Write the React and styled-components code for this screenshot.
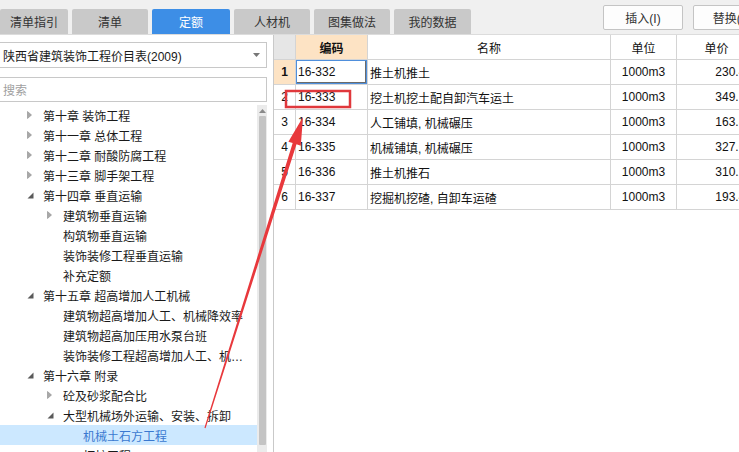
import React from "react";
import styled, { createGlobalStyle } from "styled-components";

const GlobalStyle = createGlobalStyle`
  html, body {
    margin: 0;
    padding: 0;
    background: #ffffff;
  }
  body {
    font-family: "Liberation Sans", "Noto Sans CJK SC", sans-serif;
    font-size: 12px;
    color: #1a1a1a;
  }
`;

const Page = styled.div`
  position: relative;
  width: 739px;
  height: 452px;
  overflow: hidden;
  background: #ffffff;
`;

const TopBar = styled.div`
  display: flex;
  align-items: flex-start;
  height: 35px;
  box-sizing: border-box;
  background: #f0f0f0;
  border-bottom: 1px solid #dcdcdc;
`;

const Tabs = styled.div`
  display: flex;
  gap: 4px;
  padding-top: 9px;
  flex-shrink: 0;
`;

const Tab = styled.div`
  width: ${(p) => p.$w}px;
  height: 25px;
  flex-shrink: 0;
  display: flex;
  align-items: center;
  justify-content: center;
  border-radius: 2px 2px 0 0;
  background: ${(p) => (p.$active ? "#3d8ee6" : "#c9c9c9")};
  color: ${(p) => (p.$active ? "#ffffff" : "#333333")};
  font-size: 12px;
`;

const Actions = styled.div`
  display: flex;
  gap: 10px;
  margin-left: 132px;
  margin-top: 5px;
  flex-shrink: 0;
`;

const ActionButton = styled.div`
  width: 80px;
  height: 25px;
  box-sizing: border-box;
  flex-shrink: 0;
  display: flex;
  align-items: center;
  justify-content: center;
  background: #fdfdfd;
  border: 1px solid #c4c4c4;
  border-radius: 2px;
  color: #333333;
  font-size: 12px;
`;

const Body = styled.div`
  display: flex;
  height: 417px;
`;

const LeftPanel = styled.div`
  width: 274px;
  flex-shrink: 0;
  box-sizing: border-box;
  border-right: 1px solid #c9c9c9;
  padding-top: 7px;
  display: flex;
  flex-direction: column;
`;

const Field = styled.div`
  width: 267px;
  height: ${(p) => p.$h}px;
  margin-top: ${(p) => p.$mt}px;
  box-sizing: border-box;
  border: 1px solid #c8c8c8;
  border-left: none;
  display: flex;
  align-items: center;
  padding-left: 3px;
  padding-right: 6px;
  color: ${(p) => (p.$placeholder ? "#a0a0a0" : "#1a1a1a")};
  font-size: 12px;
`;

const FieldText = styled.span`
  flex: 1;
`;

const TreeArea = styled.div`
  display: flex;
  margin-top: 3px;
  margin-right: 6px;
  flex: 1;
  overflow: hidden;
`;

const TreeList = styled.div`
  flex: 1;
  overflow: hidden;
`;

const TreeRow = styled.div`
  height: 20px;
  display: flex;
  align-items: center;
  padding-left: ${(p) => 26 + p.$level * 20}px;
  background: ${(p) => (p.$selected ? "#cce8ff" : "transparent")};
  color: ${(p) => (p.$selected ? "#3a78d0" : "#1a1a1a")};
  font-size: 12px;
  white-space: nowrap;
`;

const Expander = styled.span`
  width: 17px;
  flex-shrink: 0;
  display: flex;
  align-items: center;
  padding-left: 1px;
  box-sizing: border-box;
`;

const TreeLabel = styled.span`
  overflow: hidden;
  text-overflow: ellipsis;
  padding-right: 3px;
`;

const ScrollBar = styled.div`
  width: 10px;
  flex-shrink: 0;
  background: #ebebeb;
  display: flex;
  flex-direction: column;
  align-items: center;
`;

const ScrollArrow = styled.div`
  height: 11px;
  display: flex;
  align-items: center;
  justify-content: center;
`;

const ScrollThumb = styled.div`
  width: 7px;
  height: 329px;
  background: #c4c4c4;
  border-radius: 1px;
`;

const GridWrap = styled.div`
  flex: 1;
  overflow: hidden;
`;

const Grid = styled.div`
  display: grid;
  grid-template-columns: 22px 72px 243px 66px 80px;
  grid-auto-rows: 25px;
  width: 483px;
`;

const Cell = styled.div`
  box-sizing: border-box;
  border-right: 1px solid #d4d4d4;
  border-bottom: 1px solid #d4d4d4;
  display: flex;
  align-items: center;
  justify-content: ${(p) =>
    p.$align === "center" ? "center" : p.$align === "right" ? "flex-end" : "flex-start"};
  padding: 0 ${(p) => (p.$align === "right" ? 4 : 2)}px 0 2px;
  background: ${(p) => p.$bg || "#ffffff"};
  font-weight: ${(p) => (p.$bold ? 700 : 400)};
  font-size: 12px;
  color: #111111;
  white-space: nowrap;
  overflow: hidden;
  box-shadow: ${(p) => (p.$focus ? "inset 0 0 0 1px #4f8fdc, inset -1px -1px 0 1px #6b6b6b" : "none")};
`;

const Overlay = styled.svg`
  position: absolute;
  left: 0;
  top: 0;
  pointer-events: none;
`;

const tabs = [
  { label: "清单指引", w: 68 },
  { label: "清单", w: 76 },
  { label: "定额", w: 78, active: true },
  { label: "人材机", w: 76 },
  { label: "图集做法", w: 76 },
  { label: "我的数据", w: 77 },
];

const tree = [
  { label: "第十章 装饰工程", level: 0, state: "closed" },
  { label: "第十一章 总体工程", level: 0, state: "closed" },
  { label: "第十二章 耐酸防腐工程", level: 0, state: "closed" },
  { label: "第十三章 脚手架工程", level: 0, state: "closed" },
  { label: "第十四章 垂直运输", level: 0, state: "open" },
  { label: "建筑物垂直运输", level: 1, state: "closed" },
  { label: "构筑物垂直运输", level: 1 },
  { label: "装饰装修工程垂直运输", level: 1 },
  { label: "补充定额", level: 1 },
  { label: "第十五章 超高增加人工机械", level: 0, state: "open" },
  { label: "建筑物超高增加人工、机械降效率", level: 1 },
  { label: "建筑物超高加压用水泵台班", level: 1 },
  { label: "装饰装修工程超高增加人工、机械降效率", level: 1 },
  { label: "第十六章 附录", level: 0, state: "open" },
  { label: "砼及砂浆配合比", level: 1, state: "closed" },
  { label: "大型机械场外运输、安装、拆卸", level: 1, state: "open" },
  { label: "机械土石方工程", level: 2, selected: true },
  { label: "打桩工程", level: 2 },
];

const rows = [
  { code: "16-332", name: "推土机推土", unit: "1000m3", price: "230.45" },
  { code: "16-333", name: "挖土机挖土配自卸汽车运土", unit: "1000m3", price: "349.12" },
  { code: "16-334", name: "人工铺填, 机械碾压", unit: "1000m3", price: "163.80" },
  { code: "16-335", name: "机械铺填, 机械碾压", unit: "1000m3", price: "327.60" },
  { code: "16-336", name: "推土机推石", unit: "1000m3", price: "310.25" },
  { code: "16-337", name: "挖掘机挖碴, 自卸车运碴", unit: "1000m3", price: "193.40" },
];

const ExpandIcon = ({ state }) => {
  if (state === "closed") {
    return (
      <svg width="5" height="8" viewBox="0 0 5 8">
        <polygon points="0.5,0.5 4.5,4 0.5,7.5" fill="#a8a8a8" stroke="#8c8c8c" strokeWidth="0.6" />
      </svg>
    );
  }
  if (state === "open") {
    return (
      <svg width="7" height="7" viewBox="0 0 7 7">
        <polygon points="6.5,0.5 6.5,6.5 0.5,6.5" fill="#5a5a5a" />
      </svg>
    );
  }
  return null;
};

const Annotation = () => {
  // arrow from (205,428) to tip (303,117)
  const tail = [205, 428];
  const tip = [303, 117];
  const dx = tip[0] - tail[0];
  const dy = tip[1] - tail[1];
  const len = Math.hypot(dx, dy);
  const ux = dx / len;
  const uy = dy / len;
  const nx = -uy;
  const ny = ux;
  const base = [tip[0] - 28 * ux, tip[1] - 28 * uy];
  const pt = (p, k) => `${p[0] + nx * k},${p[1] + ny * k}`;
  const points = [
    pt(tail, -0.6),
    pt(base, -2),
    pt(base, -6.5),
    `${tip[0]},${tip[1]}`,
    pt(base, 6.5),
    pt(base, 2),
    pt(tail, 0.6),
  ].join(" ");
  return (
    <Overlay width="739" height="452" viewBox="0 0 739 452">
      <rect x="286" y="91" width="64" height="16" fill="none" stroke="#e0383c" strokeWidth="2.5" />
      <polygon points={points} fill="#e8383c" />
    </Overlay>
  );
};

export default function App() {
  return (
    <>
      <GlobalStyle />
      <Page>
        <TopBar>
          <Tabs>
            {tabs.map((t) => (
              <Tab key={t.label} $w={t.w} $active={t.active}>
                {t.label}
              </Tab>
            ))}
          </Tabs>
          <Actions>
            <ActionButton>插入(I)</ActionButton>
            <ActionButton>替换(R)</ActionButton>
          </Actions>
        </TopBar>
        <Body>
          <LeftPanel>
            <Field $h={26} $mt={0}>
              <FieldText>陕西省建筑装饰工程价目表(2009)</FieldText>
              <svg width="7" height="4" viewBox="0 0 7 4">
                <polygon points="0,0 7,0 3.5,4" fill="#777777" />
              </svg>
            </Field>
            <Field $h={25} $mt={9} $placeholder>
              搜索
            </Field>
            <TreeArea>
              <TreeList>
                {tree.map((n) => (
                  <TreeRow key={n.label} $level={n.level} $selected={n.selected}>
                    <Expander>
                      <ExpandIcon state={n.state} />
                    </Expander>
                    <TreeLabel>{n.label}</TreeLabel>
                  </TreeRow>
                ))}
              </TreeList>
              <ScrollBar>
                <ScrollArrow>
                  <svg width="7" height="4" viewBox="0 0 7 4">
                    <polygon points="0,4 7,4 3.5,0" fill="#8a8a8a" />
                  </svg>
                </ScrollArrow>
                <ScrollThumb />
              </ScrollBar>
            </TreeArea>
          </LeftPanel>
          <GridWrap>
            <Grid>
              <Cell $bg="#e6e6e6" />
              <Cell $bg="#fde3c4" $align="center" $bold>
                编码
              </Cell>
              <Cell $align="center">名称</Cell>
              <Cell $align="center">单位</Cell>
              <Cell $align="center">单价</Cell>
              {rows.map((r, i) => (
                <React.Fragment key={r.code}>
                  <Cell $align="center" $bg={i === 0 ? "#fde3c4" : "#ffffff"} $bold={i === 0}>
                    {i + 1}
                  </Cell>
                  <Cell $focus={i === 0}>{r.code}</Cell>
                  <Cell>{r.name}</Cell>
                  <Cell $align="center">{r.unit}</Cell>
                  <Cell $align="right">{r.price}</Cell>
                </React.Fragment>
              ))}
            </Grid>
          </GridWrap>
        </Body>
        <Annotation />
      </Page>
    </>
  );
}
